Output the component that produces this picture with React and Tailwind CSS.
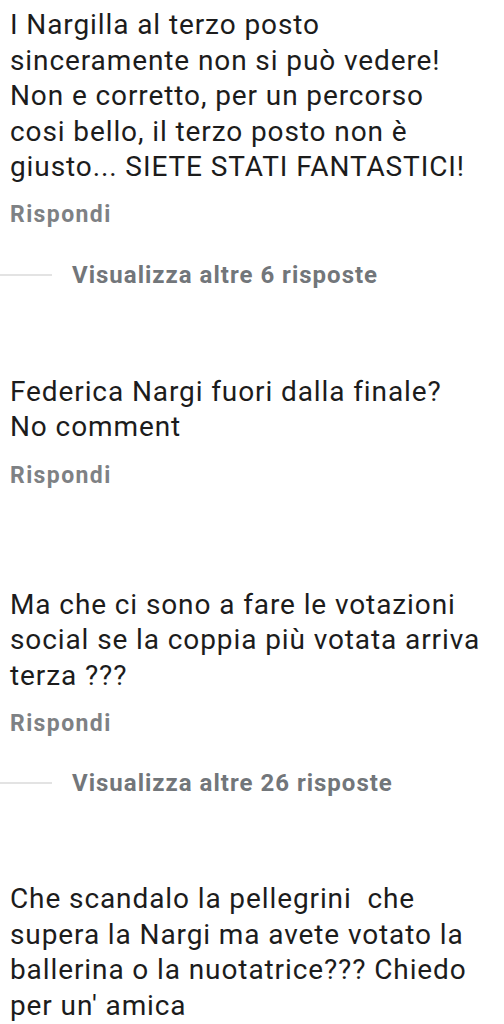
export default function App() {
  const body = "text-[28px] leading-[35.5px] text-[#1c1c1c] tracking-[0.9px]";
  const reply = "text-[23px] leading-[28px] font-bold text-[#7e8184] tracking-[1.4px]";
  const more = "text-[24px] leading-[28px] font-bold text-[#72767a] tracking-[1px]";
  const Lines = ({ lines }) => (
    <div className={body}>
      {lines.map((l, i) => (
        <div key={i} className="whitespace-pre">{l}</div>
      ))}
    </div>
  );
  const More = ({ label }) => (
    <div className="flex items-center">
      <div className="w-[52px] h-[2px] bg-[#e3e3e3]" />
      <div className={`${more} ml-[20px]`}>{label}</div>
    </div>
  );
  return (
    <div className="w-[504px] h-[1024px] overflow-hidden bg-white pl-[10px]" style={{ fontFamily: "Roboto, 'Noto Sans', sans-serif" }}>
      <div className="pt-[7px]">
        <Lines
          lines={[
            "I Nargilla al terzo posto",
            "sinceramente non si può vedere!",
            "Non e corretto, per un percorso",
            "cosi bello, il terzo posto non è",
            "giusto... SIETE STATI FANTASTICI!",
          ]}
        />
        <div className={`${reply} mt-[16px]`}>Rispondi</div>
        <div className="-ml-[10px] mt-[32px]">
          <More label="Visualizza altre 6 risposte" />
        </div>
      </div>
      <div className="mt-[85px]">
        <Lines lines={["Federica Nargi fuori dalla finale?", "No comment"]} />
        <div className={`${reply} mt-[17px]`}>Rispondi</div>
      </div>
      <div className="mt-[97px]">
        <Lines
          lines={[
            "Ma che ci sono a fare le votazioni",
            "social se la coppia più votata arriva",
            "terza ???",
          ]}
        />
        <div className={`${reply} mt-[17px]`}>Rispondi</div>
        <div className="-ml-[10px] mt-[31px]">
          <More label="Visualizza altre 26 risposte" />
        </div>
      </div>
      <div className="mt-[84px]">
        <Lines
          lines={[
            "Che scandalo la pellegrini  che",
            "supera la Nargi ma avete votato la",
            "ballerina o la nuotatrice??? Chiedo",
            "per un' amica",
          ]}
        />
      </div>
    </div>
  );
}
